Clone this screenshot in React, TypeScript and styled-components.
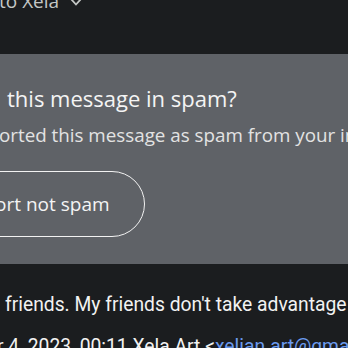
import React from "react";
import styled, { createGlobalStyle } from "styled-components";

const Global = createGlobalStyle`
  html, body { margin: 0; padding: 0; background: #1b1d1f; }
  body { width: 348px; height: 348px; overflow: hidden; }
`;

const Page = styled.div`
  width: 348px;
  height: 348px;
  overflow: hidden;
  background: #1b1d1f;
  display: flex;
  flex-direction: column;
`;

const Header = styled.div`
  height: 54px;
  flex: none;
  display: flex;
  align-items: flex-start;
  gap: 11px;
  font-family: "Open Sans", sans-serif;
  font-size: 19px;
  color: #c4c7c5;
  white-space: nowrap;
  line-height: 1;
`;

const HeaderText = styled.span`
  margin-top: -8px;
  margin-left: -1px;
`;

const Chevron = styled.svg`
  margin-top: -2px;
`;

const SpamPanel = styled.section`
  height: 210px;
  flex: none;
  background: #5f6267;
  display: flex;
  flex-direction: column;
  padding-top: 30px;
  box-sizing: border-box;
  white-space: nowrap;
  overflow: hidden;
`;

const Title = styled.h2`
  margin: 0 0 0 7px;
  font-family: "Open Sans", sans-serif;
  font-weight: 500;
  font-size: 22px;
  line-height: 28px;
  color: #f4f4f4;
`;

const Subtitle = styled.p`
  margin: 10px 0 0 -1px;
  font-family: "Open Sans", sans-serif;
  font-size: 18.8px;
  line-height: 26px;
  color: #e3e3e3;
`;

const PillButton = styled.button`
  align-self: flex-start;
  margin: 23px 0 0 -80px;
  height: 66px;
  padding: 0 34px 0 40px;
  border: 1.5px solid #f2f2f2;
  border-radius: 33px;
  background: transparent;
  color: #f4f4f4;
  font-family: "Open Sans", sans-serif;
  font-size: 19px;
`;

const Body = styled.div`
  font-family: Roboto, sans-serif;
  font-size: 19.3px;
  color: #f2f2f2;
  white-space: nowrap;
  padding-top: 30px;
  display: flex;
  flex-direction: column;
  gap: 20px;
  line-height: 22px;
`;

const Line = styled.div<{ $indent: number }>`
  margin-left: ${(p) => p.$indent}px;
`;

const Link = styled.span`
  color: #6b9bef;
  text-decoration: underline;
`;

export default function App() {
  return (
    <Page>
      <Global />
      <Header>
        <HeaderText>to Xela</HeaderText>
        <Chevron width="12" height="8" viewBox="0 0 12 8">
          <path d="M1 1l5 5.5 5-5.5" fill="none" stroke="#c4c7c5" strokeWidth="1.8" />
        </Chevron>
      </Header>
      <SpamPanel>
        <Title>this message in spam?</Title>
        <Subtitle>orted this message as spam from your inbox.</Subtitle>
        <PillButton>Report not spam</PillButton>
      </SpamPanel>
      <Body>
        <Line $indent={5}>friends. My friends don't take advantage of me.</Line>
        <Line $indent={-3}>
          r 4, 2023, 00:11 Xela Art &lt;<Link>xelian.art@gmail.com</Link>&gt;
        </Line>
      </Body>
    </Page>
  );
}
